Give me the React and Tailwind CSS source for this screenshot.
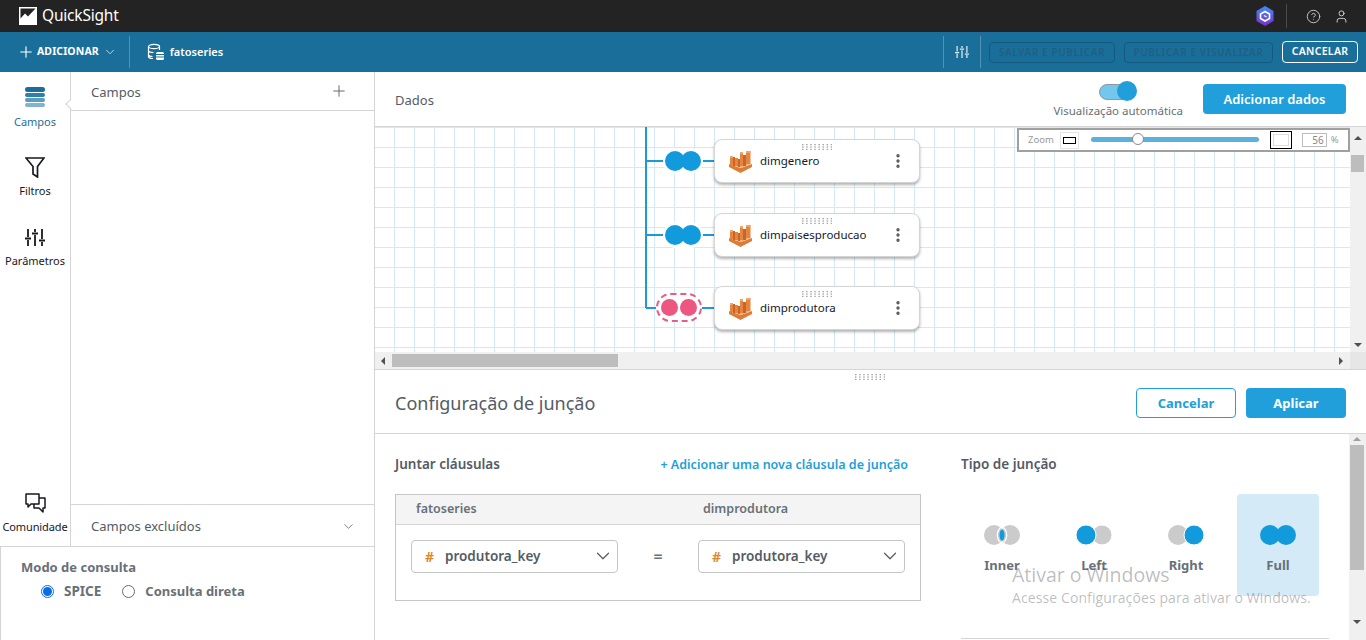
import { Plus, ChevronDown, HelpCircle, User, EllipsisVertical } from 'lucide-react';

function Logo() {
  return (
    <svg width="18" height="18" viewBox="0 0 18 18">
      <rect width="18" height="18" fill="#fff" />
      <path d="M1.500 1.500h15L9 9.500 6 6.500 1.500 11.500z" fill="#232323" />
    </svg>
  );
}

function DatasetIcon() {
  return (
    <svg width="18" height="18" viewBox="0 0 18 18" fill="none" stroke="#fff" strokeWidth="1.200">
      <ellipse cx="7" cy="3.500" rx="5.500" ry="2.200" />
      <path d="M1.500 3.500v10c0 1.200 2 2 4.500 2M12.500 3.500V7M1.500 7.500c0 1.200 2.500 2 5 2M1.500 11.500c0 1.200 2 2 4 2" />
      <rect x="9" y="9" width="8" height="8" rx="1.500" fill="#fff" stroke="none" />
      <path d="M9 11.500h8M9 14h8" stroke="#1a7099" />
    </svg>
  );
}

function ShieldIcon() {
  return (
    <svg width="18" height="20" viewBox="0 0 18 20">
      <defs>
        <linearGradient id="sg" x1="0" y1="0" x2="0" y2="1">
          <stop offset="0" stopColor="#3f8cf8" />
          <stop offset="1" stopColor="#7a2fd0" />
        </linearGradient>
      </defs>
      <path d="M9 0 17.500 5v10L9 20 .5 15V5z" fill="url(#sg)" />
      <path d="M9 5.500 13.500 8v4.500L9 15l-4.500-2.500V8z" fill="none" stroke="#fff" strokeWidth="1.600" />
      <path d="M8 9.500l2.500 1.500" stroke="#fff" strokeWidth="1.400" />
    </svg>
  );
}

function SlidersIcon({ size = 20, className }) {
  return (
    <svg width={size} height={size * 0.85} viewBox="0 0 20 17" fill="none" stroke="currentColor" strokeWidth="1.800" className={className}>
      <path d="M3 0v8M0 9.500h6M3 11v6" />
      <path d="M10 0v3M7 4.500h6M10 6v11" />
      <path d="M17 0v10M14 11.500h6M17 13v4" />
    </svg>
  );
}

function FunnelIcon() {
  return (
    <svg width="20" height="21" viewBox="0 0 20 21" fill="none" stroke="#16191f" strokeWidth="1.700" strokeLinejoin="miter">
      <path d="M1 1h18l-6.500 8.500V20L8 17V9.500z" />
    </svg>
  );
}

function BubblesIcon() {
  return (
    <svg width="21" height="20" viewBox="0 0 21 20" fill="none" stroke="#16191f" strokeWidth="1.500" strokeLinejoin="round">
      <path d="M1 1h13v10H6l-3 3v-3H1z" />
      <path d="M14 5h6v10h-2v4l-4-4H9v-4" />
    </svg>
  );
}

function StackIcon() {
  return (
    <div className="flex flex-col gap-px w-5">
      <div className="h-[5px] rounded-sm bg-[#1a6f9a]" />
      <div className="h-[4px] rounded-sm bg-[#2f7fa8]" />
      <div className="h-[4px] rounded-sm bg-[#5a9dc0]" />
      <div className="h-[4px] rounded-sm bg-[#7fb4cf]" />
    </div>
  );
}

function AthenaIcon() {
  return (
    <svg width="23" height="23" viewBox="0 0 23 23">
      <path d="M0 14 11.500 18 23 14v3L11.500 23 0 17z" fill="#dd7d35" />
      <path d="M0 14 11.500 18 23 14 11.500 12z" fill="#f3b27c" />
      <path d="M1 6h3v9H1zM6 8h3v8H6zM11 2h3v14h-3zM17 1h4.500v13H17z" fill="#e5853f" />
      <path d="M4 7h2v9H4zM9 9h2v8H9zM14 5h3v11h-3z" fill="#c8652b" />
      <path d="M1 6h3v2H1zM11 2h3v2h-3zM17 1h4.500v2H17z" fill="#efa56c" />
    </svg>
  );
}

function Grip({ className }) {
  const dots = [];
  for (let row = 0; row < 3; row++) {
    for (let col = 0; col < 8; col++) {
      dots.push(<rect key={`${row}-${col}`} x={col * 4.100} y={row * 2.400} width="1.500" height="1.300" fill="#a6a6a6" />);
    }
  }
  return (
    <svg width="30" height="6" viewBox="0 0 30 6" className={className}>
      {dots}
    </svg>
  );
}

function JoinDots({ left = '#cbcbcb', right = '#cbcbcb', inner = false }) {
  return (
    <svg width="36" height="20" viewBox="0 0 36 20">
      <circle cx="10" cy="10" r="10" fill={left} />
      <circle cx="26" cy="10" r="10" fill={right} stroke={left === right ? 'none' : '#fff'} strokeWidth={left === right ? 0 : 1} />
      {left !== right && left !== '#cbcbcb' && <circle cx="10" cy="10" r="10" fill={left} stroke="#fff" strokeWidth="1" />}
      {inner && <ellipse cx="18" cy="10" rx="2.500" ry="5.500" fill="#129bdc" />}
      {inner && <path d="M18 1.500a10 10 0 0 0 0 17M18 1.500a10 10 0 0 1 0 17" fill="none" stroke="#fff" strokeWidth="1.200" />}
    </svg>
  );
}

function TableNode({ name, top, pink }) {
  return (
    <div className="absolute left-[271px] h-[60px]" style={{ top }}>
      <div className="absolute left-0 top-[21px] w-[68px] h-[2px] bg-[#1b9ad6]" />
      {pink ? (
        <div className="absolute left-[10px] top-[7px] w-[46px] h-[29px] rounded-[15px] border-2 border-dashed border-[#ec5b84] bg-white flex items-center justify-center gap-[2px]">
          <div className="w-[17px] h-[17px] rounded-full bg-[#ec5680]" />
          <div className="w-[17px] h-[17px] rounded-full bg-[#ec5680]" />
        </div>
      ) : (
        <div className="absolute left-[19px] top-[11px] bg-white rounded-full ring-2 ring-white flex h-[22px] items-center">
          <svg width="36" height="20" viewBox="0 0 36 20">
            <circle cx="10" cy="10" r="10" fill="#129bdc" />
            <circle cx="26" cy="10" r="10" fill="#129bdc" />
          </svg>
        </div>
      )}
      <div className="absolute left-[68px] top-0 w-[206px] h-[44px] bg-white rounded-lg border border-[#d5d5d5] shadow-[0_2px_3px_rgba(0,0,0,0.3)] flex items-center pl-[14px]">
        <Grip className="absolute left-[87px] top-[4px]" />
        <AthenaIcon />
        <span className="ml-[8px] mb-[1px] text-[11.500px] text-[#16191f] flex-1">{name}</span>
        <EllipsisVertical size={18} className="mr-[12px] text-[#545b64]" strokeWidth={2.500} />
      </div>
    </div>
  );
}

function JoinType({ label, active, children }) {
  return (
    <div className={`w-[82px] h-[102px] rounded flex flex-col items-center pt-[31px] ${active ? 'bg-[#d4ebf7]' : ''}`}>
      {children}
      <span className="mt-[10px] text-[13px] font-bold text-[#687078] leading-[20px]">{label}</span>
    </div>
  );
}

function FieldSelect() {
  return (
    <div className="w-[207px] h-[33px] border border-[#c6c6c6] rounded-sm flex items-center pl-[13px] pr-[3px]">
      <span className="text-[#dd8a2c] font-bold text-[14px] w-[20px]">#</span>
      <span className="text-[13.500px] font-semibold text-[#545b64] flex-1">produtora_key</span>
      <ChevronDown size={22} strokeWidth={1.300} className="text-[#545b64]" />
    </div>
  );
}

export default function App() {
  return (
    <div className="w-[1366px] h-[640px] overflow-hidden flex flex-col bg-white relative font-['Noto_Sans',sans-serif]">
      {/* top bar */}
      <div className="h-[32px] bg-[#232323] flex items-center pl-[19px] pr-[17px]">
        <Logo />
        <span className="ml-[5px] text-[15.500px] text-white tracking-[-0.2px]">QuickSight</span>
        <div className="ml-auto">
          <ShieldIcon />
        </div>
        <div className="w-px h-[24px] bg-[#4a4a4a] ml-[12px] mr-[19px]" />
        <HelpCircle size={15} strokeWidth={1.500} className="text-[#c8c8c8]" />
        <User size={15} strokeWidth={1.500} className="text-[#d5d5d5] ml-[13px]" />
      </div>

      {/* blue toolbar */}
      <div className="h-[40px] bg-[#1a6f9a] flex items-center pl-[17px] pr-[8px] text-white">
        <Plus size={18} strokeWidth={1.500} />
        <span className="ml-[2px] text-[10.500px] font-bold tracking-[0.1px]">ADICIONAR</span>
        <ChevronDown size={14} strokeWidth={1.200} className="ml-[4px]" />
        <div className="w-px h-[32px] bg-[#4f93b5] ml-[12px]" />
        <div className="ml-[17px]"><DatasetIcon /></div>
        <span className="ml-[5px] text-[11px] font-semibold">fatoseries</span>
        <div className="w-px h-[32px] bg-[#4f93b5] ml-auto" />
        <SlidersIcon size={14} className="ml-[11px] text-[#dfe9ef]" />
        <div className="w-px h-[32px] bg-[#4f93b5] ml-[11px]" />
        <div className="ml-[8px] shrink-0 w-[126px] h-[21px] border border-[#145a7e] rounded text-[10px] font-semibold text-[#1f5f82] flex items-center justify-center tracking-[0.6px]">SALVAR E PUBLICAR</div>
        <div className="ml-[9px] shrink-0 w-[149px] h-[21px] border border-[#145a7e] rounded text-[10px] font-semibold text-[#1f5f82] flex items-center justify-center tracking-[0.6px]">PUBLICAR E VISUALIZAR</div>
        <div className="ml-[9px] shrink-0 w-[76px] h-[22px] border border-white rounded text-[10.500px] font-semibold flex items-center justify-center tracking-[0.3px]">CANCELAR</div>
      </div>

      <div className="flex-1 flex min-h-0">
        {/* left column */}
        <div className="w-[375px] flex flex-col">
          <div className="flex-1 flex min-h-0">
            <div className="w-[71px] border-r border-[#d5d5d5] flex flex-col items-center relative">
              <div className="absolute right-[-1px] top-[28px] w-[8px] h-[8px] mr-[-4px] rotate-45 bg-white border-l border-b border-[#d5d5d5]" />
              <div className="mt-[15px]"><StackIcon /></div>
              <span className="mt-[7px] text-[11px] text-[#1a6f9a] leading-[15px]">Campos</span>
              <div className="mt-[28px]"><FunnelIcon /></div>
              <span className="mt-[5px] text-[11px] text-[#16191f] leading-[15px]">Filtros</span>
              <SlidersIcon size={20} className="mt-[31px] text-[#16191f]" />
              <span className="mt-[7px] text-[11px] text-[#16191f] leading-[15px]">Parâmetros</span>
              <div className="mt-auto"><BubblesIcon /></div>
              <span className="mt-[6px] mb-[12px] text-[11px] text-[#16191f] leading-[15px] tracking-[-0.1px]">Comunidade</span>
            </div>
            <div className="flex-1 flex flex-col border-r border-[#d5d5d5]">
              <div className="h-[39px] border-b border-[#d5d5d5] flex items-center pl-[20px] pr-[26px] pt-[3px] text-[13px] text-[#545b64]">
                <span className="flex-1">Campos</span>
                <Plus size={18} strokeWidth={1.200} className="mb-[3px]" />
              </div>
              <div className="flex-1" />
              <div className="h-[42px] border-t border-[#d5d5d5] flex items-center pl-[20px] pr-[18px] pt-[2px] text-[13px] text-[#545b64]">
                <span className="flex-1">Campos excluídos</span>
                <ChevronDown size={15} strokeWidth={1.200} />
              </div>
            </div>
          </div>
          <div className="h-[94px] border border-b-0 border-[#d5d5d5] pl-[20px] pt-[11px]">
            <div className="text-[13px] font-bold text-[#687078] leading-[18px]">Modo de consulta</div>
            <div className="flex items-center mt-[6px] ml-[20px] text-[13.500px] font-bold text-[#687078] leading-[18px]">
              <div className="w-[13px] h-[13px] rounded-full border border-[#0a6fde] flex items-center justify-center">
                <div className="w-[9px] h-[9px] rounded-full bg-[#0a6fde]" />
              </div>
              <span className="ml-[10px]">SPICE</span>
              <div className="ml-[21px] w-[13px] h-[13px] rounded-full border border-[#6b6b6b]" />
              <span className="ml-[10px] text-[13px]">Consulta direta</span>
            </div>
          </div>
        </div>

        {/* main column */}
        <div className="flex-1 flex flex-col min-w-0">
          <div className="h-[55px] flex items-center pl-[20px] pr-[20px] border-b border-[#d5d5d5]">
            <span className="text-[13px] text-[#545b64] flex-1 pt-[3px]">Dados</span>
            <div className="flex flex-col items-center mr-[20px] mb-[1px]">
              <div className="relative w-[38px] h-[20px] mt-[2px]">
                <div className="absolute left-0 top-[3px] w-[36px] h-[16px] rounded-full bg-[#73c6ec] border border-[#8a9aa3]" />
                <div className="absolute right-0 top-0 w-[20px] h-[20px] rounded-full bg-[#219fda]" />
              </div>
              <span className="mt-[1px] text-[11.500px] text-[#687078] leading-[17px]">Visualização automática</span>
            </div>
            <div className="w-[143px] h-[30px] pt-[2px] rounded-sm bg-[#219fda] text-white text-[13px] font-semibold flex items-center justify-center">Adicionar dados</div>
          </div>

          {/* canvas */}
          <div className="h-[242px] relative bg-[#f0f0f0] overflow-hidden shrink-0">
            <div className="absolute left-0 top-0 w-[975px] h-[225px] bg-white bg-[linear-gradient(#d4e9f5_1px,transparent_1px),linear-gradient(90deg,#d4e9f5_1px,transparent_1px)] bg-[size:20px_20px] bg-[position:19px_0px] overflow-hidden">
              <div className="absolute left-[270px] top-0 w-[2px] h-[181px] bg-[#1b9ad6]" />
              <TableNode name="dimgenero" top={12} />
              <TableNode name="dimpaisesproducao" top={86} />
              <TableNode name="dimprodutora" top={159} pink />
            </div>
            {/* zoom control */}
            <div className="absolute left-[642px] top-[1px] w-[333px] h-[24px] bg-white border-2 border-[#a0a0a0] flex items-center pl-[9px]">
              <span className="text-[9.500px] text-[#9a9a9a]">Zoom</span>
              <div className="ml-[6px] w-[19px] h-[17px] border border-[#e4e4e4] flex items-center justify-center">
                <div className="w-[13px] h-[7px] border border-black" />
              </div>
              <div className="relative ml-[12px] mb-[1px] w-[168px] h-[5px] rounded-full bg-[#5ab1de]">
                <div className="absolute left-[41px] top-[-4px] w-[12px] h-[12px] rounded-full bg-white border border-[#8a8a8a]" />
              </div>
              <div className="ml-[11px] w-[22px] h-[18px] border border-black flex items-center justify-center">
                <div className="w-[16px] h-[12px] border border-[#dcdcdc]" />
              </div>
              <div className="ml-[10px] w-[25px] h-[14px] border border-[#bdbdbd] text-[10px] text-[#888] leading-[12px] text-right pr-[2px]">56</div>
              <span className="ml-[4px] text-[9.500px] text-[#9a9a9a]">%</span>
            </div>
            {/* vertical scrollbar */}
            <div className="absolute right-0 top-0 w-[16px] h-[225px] bg-[#f0f0f0]">
              <div className="absolute left-[4px] top-[9px] border-x-[4px] border-x-transparent border-b-[4px] border-b-[#505050]" />
              <div className="absolute left-[1px] top-[28px] w-[13px] h-[17px] bg-[#bdbdbd]" />
              <div className="absolute left-[4px] bottom-[5px] border-x-[4px] border-x-transparent border-t-[4px] border-t-[#505050]" />
            </div>
            {/* horizontal scrollbar */}
            <div className="absolute left-0 bottom-0 w-full h-[17px]">
              <div className="absolute left-[6px] top-[5px] border-y-[4px] border-y-transparent border-r-[4px] border-r-[#505050]" />
              <div className="absolute left-[17px] top-[2px] w-[226px] h-[13px] bg-[#bdbdbd]" />
              <div className="absolute left-[964px] top-[5px] border-y-[4px] border-y-transparent border-l-[4px] border-l-[#505050]" />
              <div className="absolute right-0 top-0 w-[16px] h-[17px] bg-[#e6e6e6]" />
            </div>
          </div>

          {/* join configuration */}
          <div className="h-[65px] relative border-t border-b border-[#d5d5d5] flex items-center pl-[20px] pr-[20px] pt-[3px] shrink-0">
            <Grip className="absolute left-[480px] top-[4px]" />
            <span className="flex-1 text-[18px] text-[#545b64]">Configuração de junção</span>
            <div className="w-[100px] h-[30px] pt-[1px] rounded-sm border border-[#219fda] text-[#219fda] text-[13px] font-bold flex items-center justify-center">Cancelar</div>
            <div className="ml-[10px] w-[100px] h-[30px] pt-[1px] rounded-sm bg-[#219fda] text-white text-[13px] font-bold flex items-center justify-center">Aplicar</div>
          </div>

          <div className="flex-1 relative flex min-h-0 overflow-hidden">
            <div className="w-[546px] pl-[20px] pt-[20px]">
              <div className="flex justify-between items-center pr-[13px]">
                <span className="text-[13.500px] font-semibold text-[#545b64]">Juntar cláusulas</span>
                <span className="mt-[2px] text-[12.500px] font-semibold text-[#219fda]">+ Adicionar uma nova cláusula de junção</span>
              </div>
              <div className="mt-[19px] border border-[#c6c6c6] h-[107px]">
                <div className="h-[30px] bg-[#f4f4f4] border-b border-[#d5d5d5] flex items-center text-[12.500px] font-semibold text-[#687078]">
                  <span className="ml-[20px] w-[287px]">fatoseries</span>
                  <span>dimprodutora</span>
                </div>
                <div className="flex items-center pl-[15px] pt-[15px]">
                  <FieldSelect />
                  <span className="w-[80px] text-center text-[16px] font-semibold text-[#687078]">=</span>
                  <FieldSelect />
                </div>
              </div>
            </div>
            <div className="ml-[40px] w-[368px] pt-[20px] h-[205px] border-b border-[#d5d5d5] self-start">
              <div className="text-[13.500px] font-semibold text-[#545b64]">Tipo de junção</div>
              <div className="flex mt-[20px] gap-[10px]">
                <JoinType label="Inner"><JoinDots inner /></JoinType>
                <JoinType label="Left"><JoinDots left="#129bdc" /></JoinType>
                <JoinType label="Right"><JoinDots right="#129bdc" /></JoinType>
                <JoinType label="Full" active><JoinDots left="#129bdc" right="#129bdc" /></JoinType>
              </div>
            </div>
            <div className="absolute right-0 top-0 w-[17px] h-full bg-[#f0f0f0]">
              <div className="absolute left-[4px] top-[3px] border-x-[4px] border-x-transparent border-b-[4px] border-b-[#a0a0a0]" />
              <div className="absolute left-[1px] top-[11px] w-[14px] h-[125px] bg-[#bdbdbd]" />
              <div className="absolute left-[4px] bottom-[16px] border-x-[4px] border-x-transparent border-t-[4px] border-t-[#505050]" />
            </div>
          </div>
        </div>
      </div>

      {/* windows activation watermark */}
      <div className="absolute left-[1012px] top-[562px] text-[#16191f]/30 pointer-events-none font-['Open_Sans',sans-serif]">
        <div className="text-[19.500px] leading-[25px]">Ativar o Windows</div>
        <div className="text-[14px] leading-[20px] mt-[1px] tracking-[0.1px]">Acesse Configurações para ativar o Windows.</div>
      </div>
    </div>
  );
}
